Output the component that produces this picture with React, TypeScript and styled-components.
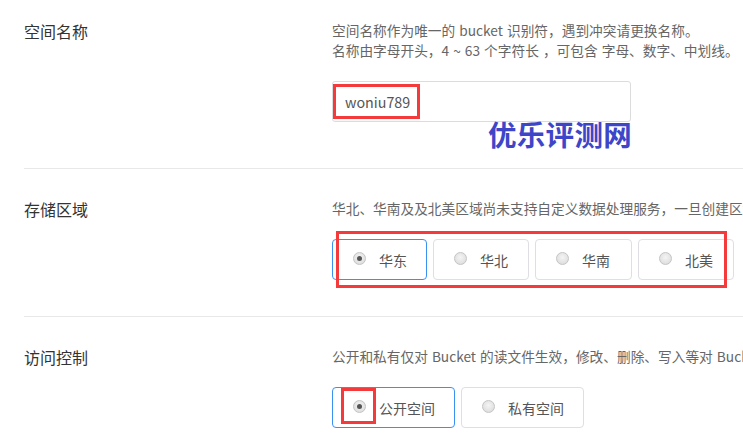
import { useState } from "react";
import styled, { createGlobalStyle } from "styled-components";

// ================================================
//              Components
// ================================================
const GlobalStyle = createGlobalStyle`
  html, body {
    margin: 0;
    padding: 0;
    background: #fff;
    overflow: hidden;
  }
  body {
    font-family: "Noto Sans CJK SC", "Noto Sans", sans-serif;
  }
`;

const Page = styled.div`
  width: 743px;
  height: 445px;
  overflow: hidden;
  padding-left: 24px;
  box-sizing: border-box;
  white-space: nowrap;
`;

const Section = styled.div<{ top: number; bottom: number }>`
  position: relative;
  display: flex;
  padding-top: ${(p) => p.top}px;
  padding-bottom: ${(p) => p.bottom}px;
  border-bottom: 1px solid #e8e8e8;
  margin-right: -200px;

  &:last-child {
    border-bottom: none;
  }
`;

const Label = styled.div`
  width: 308px;
  flex-shrink: 0;
  font-size: 16px;
  line-height: 20px;
  color: #333;
  padding-top: 1px;
`;

const Body = styled.div`
  display: flex;
  flex-direction: column;
`;

const Desc = styled.div`
  font-size: 13.7px;
  line-height: 20px;
  color: #666;
  word-spacing: 1px;
`;

const Field = styled.div`
  position: relative;
  margin-top: 21px;
  width: 299px;
  height: 41px;
  box-sizing: border-box;
  border: 1px solid #dcdcdc;
  border-radius: 3px;
  display: flex;
  align-items: center;
  padding-left: 12px;
  font-size: 14.3px;
  color: #555;
`;

const Mark = styled.div<{ l: number; t: number; w: number; h: number }>`
  position: absolute;
  left: ${(p) => p.l}px;
  top: ${(p) => p.t}px;
  width: ${(p) => p.w}px;
  height: ${(p) => p.h}px;
  border: 3px solid #f43a3a;
  box-sizing: border-box;
  pointer-events: none;
`;

const Watermark = styled.div`
  position: absolute;
  left: 464px;
  top: 119px;
  font-size: 28.5px;
  line-height: 30px;
  font-weight: 700;
  color: #3d46c8;
  letter-spacing: 0.3px;
`;

const Options = styled.div`
  position: relative;
  margin-top: 21px;
  display: flex;
  gap: 6px;
`;

const Option = styled.div<{ checked: boolean; w: number }>`
  position: relative;
  width: ${(p) => p.w}px;
  height: 41px;
  box-sizing: border-box;
  border: 1px solid ${(p) => (p.checked ? "#3a92f0" : "#dedee4")};
  border-radius: 4px;
  display: flex;
  align-items: center;
  padding-left: 20px;
  gap: 13px;
  font-size: 14px;
  color: #555;
  cursor: pointer;
`;

const Dot = styled.span<{ checked: boolean }>`
  width: 13px;
  height: 13px;
  border-radius: 50%;
  box-sizing: border-box;
  border: 1px solid #c4c4c4;
  background: radial-gradient(circle at 50% 40%, #f4f4f4 0%, #d8d8d8 100%);
  display: flex;
  align-items: center;
  justify-content: center;
  margin-top: -3px;

  &::after {
    content: "";
    width: 5px;
    height: 5px;
    border-radius: 50%;
    background: #555;
    display: ${(p) => (p.checked ? "block" : "none")};
  }
`;

// ================================================
//                App
// ================================================
const regions = ["华东", "华北", "华南", "北美"];
const regionWidths = [95, 96, 97, 96];
const access = ["公开空间", "私有空间"];

const App = () => {
  const [region, setRegion] = useState("华东");
  const [mode, setMode] = useState("公开空间");

  return (
    <Page>
      <GlobalStyle />
      <Section top={20} bottom={46}>
        <Label>空间名称</Label>
        <Body>
          <Desc>空间名称作为唯一的 bucket 识别符，遇到冲突请更换名称。</Desc>
          <Desc>名称由字母开头，4 ~ 63 个字符长 ，可包含 字母、数字、中划线。</Desc>
          <Field>
            woniu789
            <Mark l={0} t={2} w={87} h={35} />
          </Field>
        </Body>
        <Watermark>优乐评测网</Watermark>
      </Section>

      <Section top={29} bottom={36}>
        <Label>存储区域</Label>
        <Body>
          <Desc>华北、华南及及北美区域尚未支持自定义数据处理服务，一旦创建区域后将无法更改。</Desc>
          <Options>
            {regions.map((r, i) => (
              <Option
                key={r}
                w={regionWidths[i]}
                checked={region === r}
                onClick={() => setRegion(r)}
              >
                <Dot checked={region === r} />
                {r}
              </Option>
            ))}
            <Mark l={4} t={-8} w={391} h={57} />
          </Options>
        </Body>
      </Section>

      <Section top={29} bottom={20}>
        <Label>访问控制</Label>
        <Body>
          <Desc>公开和私有仅对 Bucket 的读文件生效，修改、删除、写入等对 Bucket 的操作均需要拥有者的授权。</Desc>
          <Options>
            {access.map((a, i) => (
              <Option
                key={a}
                w={123}
                checked={mode === a}
                onClick={() => setMode(a)}
              >
                <Dot checked={mode === a} />
                {a}
                {i === 0 && <Mark l={8} t={0} w={35} h={36} />}
              </Option>
            ))}
          </Options>
        </Body>
      </Section>
    </Page>
  );
};

export default App;
